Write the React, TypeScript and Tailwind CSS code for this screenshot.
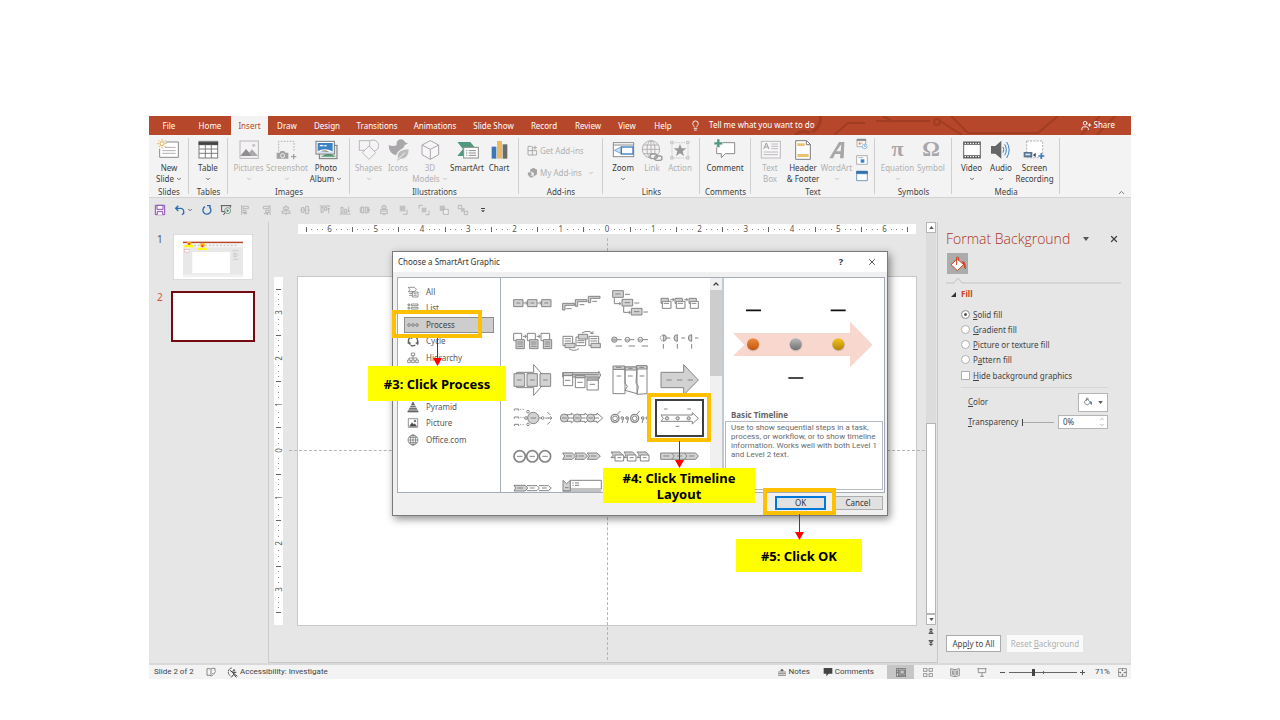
import React from 'react';
import { ChevronDown, ChevronUp, X, UserPlus, Lightbulb } from 'lucide-react';

const TABS = [
    { name: 'File', width: 'w-[40px]' },
    { name: 'Home', width: 'w-[42px]' },
    { name: 'Insert', width: 'w-[37px]' },
    { name: 'Draw', width: 'w-[38px]' },
    { name: 'Design', width: 'w-[42px]' },
    { name: 'Transitions', width: 'w-[58px]' },
    { name: 'Animations', width: 'w-[58px]' },
    { name: 'Slide Show', width: 'w-[59px]' },
    { name: 'Record', width: 'w-[42px]' },
    { name: 'Review', width: 'w-[46px]' },
    { name: 'View', width: 'w-[32px]' },
    { name: 'Help', width: 'w-[40px]' },
];

/* ---------- ribbon icons, all on a 72 unit grid ---------- */

const NewSlideIcon = () => (
    <g fill="none" stroke="#8a8a8a" strokeWidth="3">
        <path d="M26 12H64V58H8V32" fill="#fff" />
        <path d="M24 28H56M16 38H56M16 46H56" stroke="#b0b0b0" />
        <circle cx="15" cy="17" r="6" fill="#fff" stroke="#e8b04a" />
        <path d="M15 3V8M15 26V31M1 17H6M24 17H29M5 7L8 10M25 7L22 10M5 27L8 24M25 27L22 24" stroke="#e8b04a" />
    </g>
);
const TableIcon = () => (
    <g fill="none" stroke="#7d7d7d" strokeWidth="3">
        <rect x="9" y="10" width="56" height="50" fill="#fff" />
        <path d="M9 13H65V20H9Z" fill="#444" stroke="#444" />
        <path d="M28 20V60M46 20V60M9 33H65M9 46H65" />
    </g>
);
const PicturesIcon = () => (
    <g>
        <rect x="9" y="9" width="55" height="52" fill="#f4f2f4" stroke="#b9b5b9" strokeWidth="3" />
        <path d="M10 54L27 33L46 54Z" fill="#8f8d8f" />
        <path d="M36 44L45 34L63 54H46Z" fill="#aaa8aa" />
        <circle cx="50" cy="22" r="5" fill="#c9c6c9" />
    </g>
);
const ScreenshotIcon = () => (
    <g>
        <path d="M11 40V10H57V40" fill="none" stroke="#b0b0b0" strokeWidth="3" strokeDasharray="5 4" />
        <path d="M5 44H14L17 39H28L31 44H40V62H5Z" fill="#a3a1a3" />
        <circle cx="23" cy="53" r="6" fill="#a3a1a3" stroke="#f3f3f3" strokeWidth="3" />
        <path d="M56 48V64M48 56H64" stroke="#a3a1a3" strokeWidth="4" />
    </g>
);
const PhotoAlbumIcon = () => (
    <g>
        <rect x="16" y="22" width="53" height="40" fill="#e8e8e8" stroke="#777" strokeWidth="3" />
        <path d="M20 56L44 44L66 56Z" fill="#4f9a70" />
        <rect x="6" y="10" width="55" height="38" fill="#fff" stroke="#777" strokeWidth="3" />
        <rect x="11" y="15" width="45" height="28" fill="#3b82c4" />
        <path d="M16 24Q22 17 28 23Q36 18 40 25H18Z" fill="#fff" />
        <path d="M11 40Q30 28 56 40V43H11Z" fill="#fff" />
        <path d="M18 40Q32 34 46 41Z" fill="#555" />
    </g>
);
const ShapesIcon = () => (
    <g fill="#f6f4f6" stroke="#bcb8bc" strokeWidth="3">
        <circle cx="48" cy="23" r="17" />
        <rect x="7" y="8" width="31" height="29" />
        <path d="M36 24L56 44L36 64L16 44Z" />
    </g>
);
const IconsIcon = () => (
    <g fill="#a9a7a9">
        <path d="M8 21Q20 27 32 22Q30 5 44 4Q54 4 57 13L66 16L56 22Q54 30 46 33Q34 40 30 52Q8 46 8 21Z" />
        <path d="M36 61Q30 36 68 34Q68 64 43 62L36 68L32 66Z" fill="#bdbbbd" />
        <path d="M34 66L57 44" stroke="#f3f3f3" strokeWidth="3" />
    </g>
);
const CubeIcon = () => (
    <g fill="#f8f6f8" stroke="#a9a5a9" strokeWidth="3" strokeLinejoin="round">
        <path d="M37 8L62 21V50L37 64L12 50V21Z" />
        <path d="M12 21L37 34L62 21M37 34V64" fill="none" />
    </g>
);
const SmartArtIcon = () => (
    <g>
        <path d="M7 12H46L64 34L46 54H7L24 33Z" fill="#4f9a7c" />
        <rect x="26" y="28" width="44" height="32" fill="#fff" stroke="#8d8d8d" strokeWidth="3" />
        <path d="M33 38H37M41 38H63M33 45H37M41 45H63M33 52H37M41 52H63" stroke="#8d8d8d" strokeWidth="3" />
    </g>
);
const ChartIcon = () => (
    <g>
        <rect x="14" y="26" width="14" height="36" fill="#3f76b5" />
        <rect x="30" y="9" width="15" height="53" fill="#edb95e" />
        <rect x="47" y="19" width="14" height="43" fill="#6b6b6b" />
    </g>
);
const ZoomIcon = () => (
    <g fill="#fff" stroke="#8a8a8a" strokeWidth="3">
        <rect x="7" y="14" width="61" height="42" />
        <path d="M7 21H68" />
        <path d="M10 37L31 27V47Z" fill="#cfe0f2" stroke="#7fa8d2" />
        <rect x="31" y="27" width="35" height="21" stroke="#3b7cbf" strokeWidth="4" />
    </g>
);
const LinkIcon = () => (
    <g fill="none" stroke="#b3b0b3" strokeWidth="3">
        <circle cx="33" cy="34" r="26" />
        <ellipse cx="33" cy="34" rx="12" ry="26" />
        <path d="M33 8V60M7 34H59M11 21H55M11 47H48" />
        <rect x="30" y="48" width="22" height="14" rx="7" fill="#f3f3f3" stroke="#999" strokeWidth="4" />
        <rect x="44" y="54" width="22" height="13" rx="6" stroke="#999" strokeWidth="4" />
    </g>
);
const ActionIcon = () => (
    <g>
        <rect x="12" y="14" width="48" height="46" fill="none" stroke="#b5b2b5" strokeWidth="2" strokeDasharray="4 3" />
        <path d="M8 10H15V17H8ZM56 10H63V17H56ZM8 56H15V63H8ZM56 56H63V63H56Z" fill="#f3f3f3" stroke="#aaa" strokeWidth="2" />
        <path d="M36 18L41 31H55L44 40L48 54L36 46L24 54L28 40L17 31H31Z" fill="#999" />
    </g>
);
const CommentIcon = () => (
    <g>
        <path d="M11 14H65V47H37L25 59V47H11Z" fill="#fff" stroke="#8a8a8a" strokeWidth="3" />
        <path d="M16 3V29M3 16H29" stroke="#f3f3f3" strokeWidth="12" />
        <path d="M16 4V28M4 16H28" stroke="#4f9a7c" strokeWidth="7" />
    </g>
);
const TextBoxIcon = () => (
    <g stroke="#bdbabd" strokeWidth="3" fill="none">
        <rect x="10" y="10" width="57" height="50" fill="#f7f5f7" />
        <path d="M17 33L25 15L33 33M20 27H30" stroke="#9c9a9c" />
        <path d="M40 18H60M40 25H60M40 32H60M17 42H60M17 50H60" />
    </g>
);
const HeaderFooterIcon = () => (
    <g>
        <path d="M14 8H47L58 19V64H14Z" fill="#fff" stroke="#7d7d7d" strokeWidth="3" />
        <path d="M46 8V20H58" fill="none" stroke="#7d7d7d" strokeWidth="3" />
        <rect x="19" y="16" width="22" height="8" fill="#edbf70" />
        <rect x="19" y="48" width="34" height="9" fill="#edbf70" />
    </g>
);
const WordArtIcon = () => (
    <path d="M13 61L42 12H58L56 61H45L46 48H30L24 61ZM34 40H47L49 19Z" fill="#a9a6a9" />
);
const VideoIcon = () => (
    <g>
        <rect x="11" y="12" width="50" height="48" fill="#fff" stroke="#666" strokeWidth="3" />
        <path d="M11 16H61M11 56H61" stroke="#555" strokeWidth="8" />
        <path d="M14 16H60M14 56H60" stroke="#fff" strokeWidth="4" strokeDasharray="4 4" />
    </g>
);
const AudioIcon = () => (
    <g fill="none" stroke="#3b82c4" strokeWidth="3">
        <path d="M6 24H19L37 8V62L19 47H6Z" fill="#666" stroke="none" />
        <path d="M42 27Q47 35 42 44M47 19Q57 35 47 52M53 12Q68 35 53 60" />
    </g>
);
const ScreenRecordingIcon = () => (
    <g>
        <rect x="11" y="9" width="48" height="50" fill="#fff" stroke="#8a8a8a" strokeWidth="2" strokeDasharray="6 4" />
        <path d="M2 42H28V58H2Z" fill="#5a7391" />
        <path d="M7 47H22V52H7Z" fill="#dce8f5" />
        <path d="M30 51L38 44V58Z" fill="#444" />
        <path d="M55 45V63M46 54H64" stroke="#3b7cbf" strokeWidth="5" />
    </g>
);

type Tool = {
    label: string;
    label2?: string;
    width: string;
    icon?: React.ReactNode;
    glyph?: string;
    off?: boolean;
    drop?: boolean;
};

const Drop = () => <ChevronDown className="inline shrink-0 w-[6px] h-[6px]" strokeWidth={3} />;

function RibbonButton({ tool }: { tool: Tool }) {
    return (
        <button
            disabled={tool.off}
            className={`flex flex-col items-center shrink-0 pt-[3px] leading-[10px] ${tool.width} ${tool.off ? 'text-[#b1b1b1]' : 'text-[#3b3b3b]'}`}
        >
            {tool.glyph ? (
                <span className="h-6 mb-px font-['Liberation_Serif',serif] font-bold text-[22px] leading-[22px] text-[#a9a6a9]">{tool.glyph}</span>
            ) : (
                <svg viewBox="0 0 72 72" className="w-6 h-6 mb-px">{tool.icon}</svg>
            )}
            <span className="whitespace-nowrap">{tool.label}</span>
            <span className="whitespace-nowrap flex items-center gap-[2px] h-[11px]">
                {tool.label2}
                {tool.drop && <Drop />}
            </span>
        </button>
    );
}

function Group({ title, width, tools, children }: { title: string; width: string; tools?: Tool[]; children?: React.ReactNode }) {
    return (
        <section className={`flex flex-col shrink-0 relative ${width}`}>
            <div className="flex flex-1">
                {tools?.map((tool) => <RibbonButton key={tool.label} tool={tool} />)}
                {children}
            </div>
            <h2 className="text-center leading-[10px] text-[#444]">{title}</h2>
            <span className="absolute right-0 top-[3px] bottom-[3px] w-px bg-[#cfcfcf]" />
        </section>
    );
}

function TitleTabs() {
    return (
        <header className="relative flex h-[19px] bg-[#b7472a] text-white overflow-hidden">
            <svg className="absolute right-0 top-0 w-[361px] h-[19px]" viewBox="0 0 361 19" fill="none" stroke="#a03d23" strokeWidth="2">
                <path d="M64 19L78 7H95M106 5H160M170 5L192 19M113 0L124 6M181 0L198 17H268L288 0M311 19L330 0M327 19L345 0" />
                <path d="M25 19A14 14 0 0 1 40 17M50 0A14 14 0 0 1 42 16" strokeWidth="3" />
                <circle cx="167" cy="6" r="3" />
            </svg>
            <nav className="relative flex">
                {TABS.map((tab) => (
                    <button
                        key={tab.name}
                        className={`whitespace-nowrap text-center ${tab.width} ${tab.name === 'Insert' ? 'bg-[#f3f3f3] text-[#b7472a]' : ''}`}
                    >
                        {tab.name}
                    </button>
                ))}
            </nav>
            <button className="relative flex items-center gap-2 ml-[7px] pb-px whitespace-nowrap">
                <Lightbulb className="w-[11px] h-[11px]" />
                Tell me what you want to do
            </button>
            <button className="relative flex items-center gap-[2px] ml-auto mr-4 pb-px">
                <UserPlus className="w-[11px] h-[11px]" />
                Share
            </button>
        </header>
    );
}

function Ribbon() {
    return (
        <div className="relative flex h-[63px] bg-[#f3f3f3] border-b border-[#d2d2d2]">
            <Group title="Slides" width="w-[40px]" tools={[{ label: 'New', label2: 'Slide', width: 'w-[40px]', icon: <NewSlideIcon />, drop: true }]} />
            <Group title="Tables" width="w-[39px]" tools={[{ label: 'Table', width: 'w-[38px]', icon: <TableIcon />, drop: true }]} />
            <Group
                title="Images"
                width="w-[122px]"
                tools={[
                    { label: 'Pictures', width: 'w-[41px]', icon: <PicturesIcon />, off: true, drop: true },
                    { label: 'Screenshot', width: 'w-[36px]', icon: <ScreenshotIcon />, off: true, drop: true },
                    { label: 'Photo', label2: 'Album', width: 'w-[42px]', icon: <PhotoAlbumIcon />, drop: true },
                ]}
            />
            <Group
                title="Illustrations"
                width="w-[169px]"
                tools={[
                    { label: 'Shapes', width: 'w-[37px]', icon: <ShapesIcon />, off: true, drop: true },
                    { label: 'Icons', width: 'w-[22px]', icon: <IconsIcon />, off: true },
                    { label: '3D', label2: 'Models', width: 'w-[42px]', icon: <CubeIcon />, off: true, drop: true },
                    { label: 'SmartArt', width: 'w-[32px]', icon: <SmartArtIcon /> },
                    { label: 'Chart', width: 'w-[32px]', icon: <ChartIcon /> },
                ]}
            />
            <Group title="Add-ins" width="w-[84px]">
                <div className="flex flex-col gap-[11px] pt-[10px] pl-2 text-[#b1b1b1]">
                    <button disabled className="flex items-center gap-[2px] leading-[10px] whitespace-nowrap">
                        <svg viewBox="0 0 33 33" className="w-[11px] h-[11px]" fill="none" stroke="#aaa" strokeWidth="3">
                            <path d="M14 4H3V30H29V17H3M16 4V30M24 2V14M18 8H30" />
                        </svg>
                        Get Add-ins
                    </button>
                    <button disabled className="flex items-center gap-[2px] leading-[10px] whitespace-nowrap">
                        <svg viewBox="0 0 33 33" className="w-[11px] h-[11px]" fill="#a5a5a5">
                            <path d="M9 8L19 2L30 8V22L20 29V17L9 13Z" />
                            <circle cx="8" cy="21" r="6" />
                            <path d="M7 26H18V31H7Z" />
                        </svg>
                        My Add-ins
                        <span className="ml-1"><Drop /></span>
                    </button>
                </div>
            </Group>
            <Group
                title="Links"
                width="w-[97px]"
                tools={[
                    { label: 'Zoom', width: 'w-[40px]', icon: <ZoomIcon />, drop: true },
                    { label: 'Link', width: 'w-[18px]', icon: <LinkIcon />, off: true },
                    { label: 'Action', width: 'w-[38px]', icon: <ActionIcon />, off: true },
                ]}
            />
            <Group title="Comments" width="w-[51px]" tools={[{ label: 'Comment', width: 'w-[50px]', icon: <CommentIcon /> }]} />
            <Group
                title="Text"
                width="w-[124px]"
                tools={[
                    { label: 'Text', label2: 'Box', width: 'w-[38px]', icon: <TextBoxIcon />, off: true },
                    { label: 'Header', label2: '& Footer', width: 'w-[28px]', icon: <HeaderFooterIcon /> },
                    { label: 'WordArt', width: 'w-[39px]', icon: <WordArtIcon />, off: true, drop: true },
                ]}
            >
                <div className="flex flex-col gap-1 pt-[3px]">
                    <button aria-label="Date & Time">
                        <svg viewBox="0 0 36 36" className="w-3 h-3" fill="#fff" stroke="#8d8d8d" strokeWidth="2">
                            <path d="M3 4H29V26H3Z" />
                            <path d="M3 4H29V8H3Z" fill="#777" />
                            <path d="M8 13H14V20H8Z" fill="#e38a4f" stroke="none" />
                            <path d="M18 13V18" />
                            <circle cx="26" cy="25" r="7" stroke="#5f97cf" />
                            <path d="M26 20V26H29" stroke="#3b82c4" fill="none" />
                        </svg>
                    </button>
                    <button aria-label="Slide Number">
                        <svg viewBox="0 0 36 36" className="w-3 h-3" fill="#fff" stroke="#8d8d8d" strokeWidth="2">
                            <path d="M2 5H34V31H2Z" />
                            <path d="M7 11H22" />
                            <path d="M14 16H25V26H14Z" fill="#3b82c4" stroke="none" />
                        </svg>
                    </button>
                    <button aria-label="Object">
                        <svg viewBox="0 0 36 36" className="w-3 h-3" fill="#fff" stroke="#2f6fae" strokeWidth="2">
                            <path d="M2 4H34V32H2Z" />
                            <path d="M2 4H34V11H2Z" fill="#2f6fae" />
                        </svg>
                    </button>
                </div>
            </Group>
            <Group
                title="Symbols"
                width="w-[77px]"
                tools={[
                    { label: 'Equation', width: 'w-[45px]', glyph: 'π', off: true, drop: true },
                    { label: 'Symbol', width: 'w-[22px]', glyph: 'Ω', off: true },
                ]}
            />
            <Group
                title="Media"
                width="w-[108px]"
                tools={[
                    { label: 'Video', width: 'w-[39px]', icon: <VideoIcon />, drop: true },
                    { label: 'Audio', width: 'w-[20px]', icon: <AudioIcon />, drop: true },
                    { label: 'Screen', label2: 'Recording', width: 'w-[47px]', icon: <ScreenRecordingIcon /> },
                ]}
            />
            <button aria-label="Collapse ribbon" className="ml-auto mr-[5px] self-end text-[#555]">
                <ChevronUp className="w-[9px] h-[9px]" />
            </button>
        </div>
    );
}

/* quick access icons, 36 unit grid */
const QUICK: { name: string; art: React.ReactNode }[] = [
    { name: 'Align Left', art: <path d="M5 3V33M9 7H25V14H9ZM9 19H18V26H9ZM22 28H12L16 24M12 28L16 32" /> },
    { name: 'Align Right', art: <path d="M30 3V33M26 7H10V14H26ZM26 19H17V26H26ZM12 29H24L20 25M24 29L20 33" /> },
    { name: 'Align Center', art: <path d="M18 3V9M11 9H25V16H11ZM18 16V21M6 21H30V28H6ZM18 28V33" /> },
    { name: 'Align Middle', art: <path d="M3 18H8M8 11H15V25H8ZM15 18H20M20 7H28V29H20ZM28 18H33" /> },
    { name: 'Align Top', art: <path d="M2 6H34M6 10H12V25H6ZM17 10H23V19H17ZM29 28V12L25 16M29 12L33 16" /> },
    { name: 'Align Bottom', art: <path d="M2 30H34M6 26H12V10H6ZM17 26H23V16H17ZM29 8V24L25 20M29 24L33 20" /> },
    { name: 'Distribute Horizontally', art: <path d="M4 9V27M8 9H14V27H8ZM19 9H25V27H19ZM29 9V27M25 18H34" /> },
    { name: 'Distribute Vertically', art: <path d="M18 2V6M12 6H24V13H12ZM6 17H30M8 21H28V29H8ZM18 29V34" /> },
    { name: 'Bring to Front', art: <><path d="M5 5H22V22H5Z" fill="#c4c0c4" stroke="none" /><path d="M27 17V31H15" /></> },
    { name: 'Send to Back', art: <><path d="M3 14V4H14M33 20V32H22" /><path d="M11 11H25V25H11Z" fill="#c4c0c4" stroke="none" /></> },
    { name: 'Bring Forward', art: <><path d="M5 5H21V21H5Z" fill="#c4c0c4" stroke="none" /><path d="M16 16H31V31H16Z" fill="#eee" /></> },
    { name: 'Group', art: <><path d="M4 4H14V14H4ZM22 22H32V32H22Z" /><path d="M12 12H23V23H12Z" fill="#c4c0c4" stroke="none" /></> },
];

function QuickAccess() {
    return (
        <div className="flex items-center justify-between w-[340px] h-[24px] pl-[5px]">
            <button aria-label="Save">
                <svg viewBox="0 0 36 36" className="w-3 h-3" fill="#f0e8f7" stroke="#8a4fb3" strokeWidth="3">
                    <path d="M4 4H32V32H4Z" />
                    <path d="M9 4H27V16H9ZM10 32V23H26V32" fill="#fff" />
                </svg>
            </button>
            <button aria-label="Undo" className="flex items-center gap-px w-[19px] text-[#444]">
                <svg viewBox="0 0 36 36" className="w-3 h-3 shrink-0" fill="none" stroke="#2b6cb0" strokeWidth="4">
                    <path d="M13 5L5 13L13 21M6 13H20Q31 14 29 28L24 32" />
                </svg>
                <Drop />
            </button>
            <button aria-label="Redo">
                <svg viewBox="0 0 36 36" className="w-3 h-3" fill="none" stroke="#2b6cb0" strokeWidth="4">
                    <path d="M12 8A12 12 0 1 0 25 9M18 5H27V14" />
                </svg>
            </button>
            <button aria-label="Start From Beginning">
                <svg viewBox="0 0 36 36" className="w-3 h-3" fill="none" stroke="#555" strokeWidth="3">
                    <path d="M2 5H34M5 5V23H16M31 5V11M10 33L17 24" />
                    <circle cx="23" cy="20" r="9" fill="#dff0e6" stroke="#666" strokeWidth="2" />
                    <path d="M20 15L28 20L20 25Z" fill="#3a8f63" stroke="none" />
                </svg>
            </button>
            {QUICK.map((q) => (
                <button key={q.name} aria-label={q.name} disabled>
                    <svg viewBox="0 0 36 36" className="w-3 h-3" fill="none" stroke="#a2a2a2" strokeWidth="2">{q.art}</svg>
                </button>
            ))}
            <button aria-label="Customize toolbar">
                <svg viewBox="0 0 36 36" className="w-3 h-3" fill="#444">
                    <path d="M12 12H24V15H12ZM12 19H24L18 25Z" />
                </svg>
            </button>
        </div>
    );
}

function Thumbnails() {
    return (
        <aside className="w-[120px] shrink-0 border-r border-[#cccccc] pt-[12px]">
            <button className="flex items-start w-full h-[57px] pl-2 text-[10px] leading-[10px] text-[#555]">
                <span className="w-[16px] text-left">1</span>
                <svg viewBox="0 0 240 138" className="w-20 h-[46px]">
                    <rect width="240" height="138" fill="#fff" stroke="#ccc" strokeWidth="4" />
                    <rect x="30" y="24" width="180" height="104" fill="#e8e8e8" />
                    <rect x="30" y="23" width="180" height="5" fill="#b7472a" />
                    <rect x="30" y="28" width="180" height="12" fill="#f3f3f3" />
                    <path d="M64 34H190" stroke="#bbb" strokeWidth="3" strokeDasharray="5 6" />
                    <rect x="58" y="54" width="113" height="64" fill="#fff" />
                    <rect x="34" y="47" width="16" height="7" fill="#fff" stroke="#d77" />
                    <path d="M34 33H61V40H34ZM74 41H101V48H74Z" fill="#ff0" />
                    <path d="M42 24H55V32H42ZM82 28H95V38H82Z" fill="#ffb400" />
                    <path d="M46 27H51V32H46ZM86 34H91V40H86Z" fill="#e33" />
                    <path d="M178 50H196M180 58H192M180 63H196M180 68H192M180 76H196" stroke="#999" strokeWidth="1" />
                    <rect x="30" y="122" width="180" height="4" fill="#f3f3f3" />
                </svg>
            </button>
            <button className="flex items-start w-full pl-2 text-[10px] leading-[12px] text-[#d0523a]">
                <span className="w-[14px] text-left">2</span>
                <span className="w-[84px] h-[51px] bg-white border-2 border-[#740b12]" />
            </button>
        </aside>
    );
}

function HorizontalRuler() {
    return (
        <div className="flex h-[10px] bg-white text-[8px] leading-[10px] text-[#555] mx-px">
            <span className="flex-[0.17]" />
            {[6, 5, 4, 3, 2, 1, 0, 1, 2, 3, 4, 5, 6].map((n, i) => (
                <div key={i} className="flex flex-1 items-center justify-between">
                    <i className="w-px h-[5px] bg-[#666]" />
                    {[0, 1, 2].map((d) => <i key={d} className="w-px h-px bg-[#888]" />)}
                    <span>{n}</span>
                    {[0, 1, 2, 3].map((d) => <i key={d} className={d < 3 ? 'w-px h-px bg-[#888]' : 'w-0'} />)}
                </div>
            ))}
            <i className="w-px h-[5px] self-center bg-[#666]" />
            <span className="flex-[0.17]" />
        </div>
    );
}

function VerticalRuler() {
    return (
        <div className="flex flex-col w-[9px] h-[348px] mt-[55px] ml-[5px] bg-white text-[8px] leading-[5px] text-[#555]">
            <span className="flex-[0.25]" />
            {[3, 2, 1, 0, 1, 2, 3].map((n, i) => (
                <div key={i} className="flex flex-col flex-1 items-center justify-between">
                    <i className="h-px w-[5px] bg-[#666]" />
                    {[0, 1, 2].map((d) => <i key={d} className="w-px h-px bg-[#888]" />)}
                    <span className="-rotate-90">{n}</span>
                    {[0, 1, 2, 3].map((d) => <i key={d} className={d < 3 ? 'w-px h-px bg-[#888]' : 'h-0'} />)}
                </div>
            ))}
            <i className="h-px w-[5px] self-center bg-[#666]" />
            <span className="flex-[0.25]" />
        </div>
    );
}

function Stage() {
    return (
        <main className="flex flex-1 min-w-0 border-b border-[#c8c8c8]">
            <div className="w-[28px] shrink-0"><VerticalRuler /></div>
            <div className="relative flex-1 min-w-0 pt-[2px]">
                <HorizontalRuler />
                <div className="h-[350px] mt-[42px] bg-white border border-[#c8c8c8]" />
                <span className="absolute left-1/2 top-[16px] bottom-[2px] border-l border-dashed border-[#b5b5b5]" />
                <span className="absolute left-[-8px] right-[-8px] top-[228px] border-t border-dashed border-[#b5b5b5]" />
            </div>
            <div className="flex flex-col items-center w-[20px] shrink-0 pl-[8px] text-[#555]">
                <button aria-label="Scroll up" className="flex items-center justify-center w-[10px] h-[11px] bg-white border border-[#b5b5b5]">
                    <svg viewBox="0 0 6 4" className="w-[5px] h-[3px]"><path d="M0 4L3 0L6 4Z" fill="#555" /></svg>
                </button>
                <div className="w-[10px] h-[190px] bg-[#dcdcdc]" />
                <div className="w-[10px] h-[191px] bg-white border border-[#b5b5b5]" />
                <button aria-label="Scroll down" className="flex items-center justify-center w-[10px] h-[11px] bg-white border border-[#b5b5b5]">
                    <svg viewBox="0 0 6 4" className="w-[5px] h-[3px]"><path d="M0 0L3 4L6 0Z" fill="#555" /></svg>
                </button>
                <button aria-label="Previous slide" className="mt-[2px]">
                    <svg viewBox="0 0 18 24" className="w-[6px] h-2" fill="#555"><path d="M2 10L9 3L16 10ZM2 17L9 10L16 17ZM2 18H16V21H2Z" /></svg>
                </button>
                <button aria-label="Next slide" className="mt-1">
                    <svg viewBox="0 0 18 24" className="w-[6px] h-2" fill="#555"><path d="M2 14L9 21L16 14ZM2 7L9 14L16 7ZM2 3H16V6H2Z" /></svg>
                </button>
            </div>
        </main>
    );
}

const FILLS = [
    { id: 'solid', key: 'S', rest: 'olid fill' },
    { id: 'gradient', key: 'G', rest: 'radient fill' },
    { id: 'picture', key: 'P', rest: 'icture or texture fill' },
    { id: 'pattern', pre: 'P', key: 'a', rest: 'ttern fill' },
];

function FormatPane() {
    return (
        <aside className="flex flex-col w-[194px] shrink-0 border-l border-[#c8c8c8] pl-2 pb-[11px] text-[#444]">
            <div className="flex items-center h-[20px] mt-[7px] pr-3">
                <h2 className="flex-1 font-['Open_Sans','Noto_Sans',sans-serif] font-light text-[14px] text-[#a83424] whitespace-nowrap">Format Background</h2>
                <button aria-label="Pane options" className="mr-5">
                    <svg viewBox="0 0 6 4" className="w-[6px] h-1"><path d="M0 0L3 4L6 0Z" fill="#555" /></svg>
                </button>
                <button aria-label="Close pane"><X className="w-[10px] h-[10px]" strokeWidth={3} /></button>
            </div>
            <button aria-label="Fill & Line" className="flex items-center justify-center w-[21px] h-[21px] mt-1 ml-px bg-[#acacac]">
                <svg viewBox="0 0 54 54" className="w-[18px] h-[18px]">
                    <path d="M25 12L44 29L25 47L6 29Z" fill="#fff" stroke="#cf3f1c" strokeWidth="3" />
                    <path d="M23 30V7Q26 3 29 8V18" fill="none" stroke="#cf3f1c" strokeWidth="3" />
                    <path d="M38 17Q52 18 50 43Q44 40 44 29Z" fill="#cf3f1c" />
                </svg>
            </button>
            <svg viewBox="0 0 175 10" className="w-[175px] h-[10px]" fill="none" stroke="#c3c3c3">
                <path d="M0 9H8L12 4L16 9H175" />
            </svg>
            <h3 className="flex items-center gap-[5px] mt-1 ml-[5px] leading-[12px] font-bold text-[#c8401f]">
                <svg viewBox="0 0 5 5" className="w-[5px] h-[5px]"><path d="M5 0V5H0Z" fill="#333" /></svg>
                Fill
            </h3>
            <div className="flex flex-col mt-[7px] ml-[15px]">
                {FILLS.map((f) => (
                    <label key={f.id} className="flex items-center gap-[3px] h-[15px]">
                        <input
                            type="radio"
                            name="fill"
                            defaultChecked={f.id === 'solid'}
                            className="appearance-none w-[9px] h-[9px] rounded-full border border-[#b0b0b0] bg-white checked:bg-[#555] checked:shadow-[inset_0_0_0_2px_white]"
                        />
                        <span>{f.pre}<u>{f.key}</u>{f.rest}</span>
                    </label>
                ))}
                <label className="flex items-center gap-[3px] h-[17px]">
                    <input type="checkbox" className="appearance-none w-[9px] h-[9px] border border-[#b0b0b0] bg-white" />
                    <span><u>H</u>ide background graphics</span>
                </label>
            </div>
            <div className="ml-[15px] mr-[23px] mt-[3px] pt-[4px] pl-[7px] border-t border-[#d6d6d6]">
                <div className="flex items-center justify-between h-[20px]">
                    <span><u>C</u>olor</span>
                    <button aria-label="Fill color" className="flex items-center justify-center gap-[5px] w-[30px] h-[19px] bg-white border border-[#b5b5b5]">
                        <svg viewBox="0 0 30 30" className="w-[10px] h-[10px]" fill="none" stroke="#555" strokeWidth="2">
                            <path d="M4 14L13 6L22 16L13 24Q6 24 4 14ZM10 12V4Q13 1 15 5V9" />
                            <path d="M22 11Q29 14 26 24L22 20Z" fill="#2f6fae" stroke="none" />
                        </svg>
                        <svg viewBox="0 0 6 4" className="w-[5px] h-[3px]"><path d="M0 0L3 4L6 0Z" fill="#555" /></svg>
                    </button>
                </div>
                <div className="flex items-center h-[20px]">
                    <label htmlFor="transparency"><u>T</u>ransparency</label>
                    <input
                        id="transparency"
                        type="range"
                        defaultValue="0"
                        className="appearance-none w-[32px] h-[7px] ml-auto mr-1 bg-[linear-gradient(#aaa,#aaa)] bg-[length:100%_1px] bg-center bg-no-repeat [&::-webkit-slider-thumb]:appearance-none [&::-webkit-slider-thumb]:w-px [&::-webkit-slider-thumb]:h-[7px] [&::-webkit-slider-thumb]:bg-[#444]"
                    />
                    <div className="flex items-center w-[50px] h-[14px] bg-white border border-[#b5b5b5]">
                        <input aria-label="Transparency value" defaultValue="0%" className="w-[36px] pl-1 outline-none bg-transparent" />
                        <span className="flex flex-col ml-auto mr-[2px] text-[#777]">
                            <ChevronUp className="w-[6px] h-[6px]" />
                            <ChevronDown className="w-[6px] h-[6px]" />
                        </span>
                    </div>
                </div>
            </div>
            <div className="flex gap-[6px] mt-auto">
                <button className="w-[55px] h-[17px] bg-white border border-[#ababab] leading-[14px] whitespace-nowrap">App<u>l</u>y to All</button>
                <button disabled className="w-[76px] h-[17px] bg-[#fafafa] text-[#b1b1b1] whitespace-nowrap">Reset <u>B</u>ackground</button>
            </div>
        </aside>
    );
}

function StatusBar() {
    return (
        <footer className="flex items-center h-[14px] bg-[#f3f3f3] font-['Roboto','Noto_Sans',sans-serif] text-[#444] whitespace-nowrap">
            <span className="ml-[5px] w-[52px]">Slide 2 of 2</span>
            <svg viewBox="0 0 30 30" className="w-[10px] h-[10px] mr-[11px]" fill="none" stroke="#555" strokeWidth="2">
                <path d="M14 5H3V25H13L15 28M15 28V6L18 4H27V12M18 25H21M19 18L23 22L29 13" />
            </svg>
            <button className="flex items-center gap-[2px]">
                <svg viewBox="0 0 33 33" className="w-[11px] h-[11px]" fill="none" stroke="#444" strokeWidth="3">
                    <path d="M14 3Q3 6 4 17Q5 24 11 27" strokeDasharray="6 2" />
                    <circle cx="21" cy="10" r="2" />
                    <path d="M12 13L20 16H28M20 16V22L13 31M20 22L28 31M9 10L31 28" />
                </svg>
                Accessibility: Investigate
            </button>
            <button className="flex items-center gap-[3px] ml-auto mr-[13px]">
                <svg viewBox="0 0 24 24" className="w-2 h-2" fill="none" stroke="#555" strokeWidth="2">
                    <path d="M0 12H24M0 17H24M0 22H24" /><path d="M8 8L12 3L16 8Z" fill="#555" />
                </svg>
                Notes
            </button>
            <button className="flex items-center gap-[2px] mr-[13px]">
                <svg viewBox="0 0 30 30" className="w-[10px] h-[10px]"><path d="M2 3H28V20H17L10 28V20H2Z" fill="#444" /></svg>
                Comments
            </button>
            <button aria-label="Normal view" className="flex items-center justify-center w-[27px] h-[14px] bg-[#c6c6c6]">
                <svg viewBox="0 0 30 27" className="w-[10px] h-[9px]" fill="none" stroke="#555" strokeWidth="2">
                    <path d="M1 1H29V26H1ZM8 1V26M12 6H25V18H12ZM8 22H29M1 8H8M1 14H8" />
                </svg>
            </button>
            <button aria-label="Slide sorter" className="ml-[9px]">
                <svg viewBox="0 0 30 27" className="w-[10px] h-[9px]" fill="none" stroke="#666" strokeWidth="2">
                    <path d="M1 1H12V10H1ZM18 1H29V10H18ZM1 17H12V26H1ZM18 17H29V26H18Z" />
                </svg>
            </button>
            <button aria-label="Reading view" className="ml-[17px]">
                <svg viewBox="0 0 30 27" className="w-[10px] h-[9px]" fill="none" stroke="#666" strokeWidth="2">
                    <path d="M2 2L15 5L28 2V23L15 26L2 23ZM15 5V26M7 7V20M10 8V21M20 8V21M23 7V20" />
                </svg>
            </button>
            <button aria-label="Slide show" className="ml-[17px]">
                <svg viewBox="0 0 30 27" className="w-[10px] h-[9px]" fill="none" stroke="#666" strokeWidth="2">
                    <path d="M1 2H29M4 2V14H26V2M15 14V25M9 25H21" />
                </svg>
            </button>
            <button aria-label="Zoom out" className="ml-[13px] w-[7px]"><span className="block w-[5px] h-px bg-[#555]" /></button>
            <input
                aria-label="Zoom"
                type="range"
                min="0"
                max="100"
                defaultValue="35"
                className="appearance-none w-[68px] h-[7px] mx-[2px] bg-[linear-gradient(#666,#666),linear-gradient(#666,#666)] bg-[length:100%_1px,1px_3px] bg-center bg-no-repeat [&::-webkit-slider-thumb]:appearance-none [&::-webkit-slider-thumb]:w-[3px] [&::-webkit-slider-thumb]:h-[7px] [&::-webkit-slider-thumb]:bg-[#444]"
            />
            <button aria-label="Zoom in" className="ml-[1px]">
                <svg viewBox="0 0 10 10" className="w-[5px] h-[5px]" stroke="#555" strokeWidth="2"><path d="M0 5H10M5 0V10" /></svg>
            </button>
            <button className="w-[17px] ml-[9px]">71%</button>
            <button aria-label="Fit slide" className="ml-[7px] mr-1">
                <svg viewBox="0 0 30 30" className="w-[9px] h-[9px]" fill="none" stroke="#555" strokeWidth="2">
                    <path d="M2 2H28V28H2ZM2 15H10L7 12M10 15L7 18M28 15H20L23 12M20 15L23 18M15 2V10L12 7M15 10L18 7M15 28V20L12 23M15 20L18 23" />
                </svg>
            </button>
        </footer>
    );
}

/* ---------- dialog ---------- */

const CATEGORIES: { name: string; art: React.ReactNode }[] = [
    { name: 'All', art: <><path d="M4 4H22L28 11L22 17H4L9 11Z" /><path d="M16 18H33V33H16ZM6 22H16M6 28H16M20 23H29M20 28H29" /></> },
    { name: 'List', art: <path d="M3 6H8V11H3ZM3 16H8V21H3ZM3 26H8V31H3ZM13 6H33V11H13ZM13 16H33V21H13ZM13 26H33V31H13Z" /> },
    { name: 'Process', art: <><circle cx="6" cy="18" r="4" /><circle cx="18" cy="18" r="4" /><circle cx="30" cy="18" r="4" /></> },
    { name: 'Cycle', art: <><path d="M27 7A14 14 0 0 1 31 22M25 30A14 14 0 0 1 11 31M5 23A14 14 0 0 1 13 6" strokeWidth="4" /><path d="M13 2V11L20 6ZM26 24L34 20L33 29ZM2 24L9 21L10 29Z" fill="#666" /></> },
    { name: 'Hierarchy', art: <path d="M13 3H23V11H13ZM18 11V18M6 24V18H30V24M18 18V24M2 24H10V32H2ZM14 24H22V32H14ZM26 24H34V32H26Z" /> },
    { name: 'Pyramid', art: <><path d="M18 3L34 33H2Z" fill="#666" /><path d="M9 14H27M7 20H29M4 27H32" stroke="#fff" /></> },
    { name: 'Picture', art: <><path d="M4 5H32V31H4Z" /><path d="M8 28L15 17L20 23L23 20L29 28Z" fill="#444" /><path d="M22 10H26V14H22Z" fill="#444" /></> },
    { name: 'Office.com', art: <><circle cx="18" cy="18" r="15" /><path d="M18 3V33M3 18H33M6 10H30M6 26H30" /><ellipse cx="18" cy="18" rx="8" ry="15" /></> },
];

function CategoryList() {
    return (
        <nav className="w-[103px] h-full pt-[6px] px-[6px] border-r border-[#a5adb8] text-[#5a5a5a]">
            <div className="grid grid-rows-10 h-[164px]">
                {CATEGORIES.map((c) => (
                    <React.Fragment key={c.name}>
                        {c.name === 'Pyramid' && <div className="row-span-2" />}
                        <button
                            className={`flex items-center gap-[7px] w-[90px] h-[16px] pl-[2px] border ${c.name === 'Process' ? 'bg-[#cdcdcd] border-[#8f8f8f] text-[#444]' : 'border-transparent'}`}
                        >
                            <svg viewBox="0 0 36 36" className="w-3 h-3" fill="none" stroke="#606060" strokeWidth="2">{c.art}</svg>
                            {c.name}
                        </button>
                    </React.Fragment>
                ))}
            </div>
        </nav>
    );
}

/* layout previews, drawn on a 147 x 114 cell centred at 73,57 */
const G = '#d2d2d2';
const LAYOUTS: { name: string; art: React.ReactNode }[] = [
    {
        name: 'Basic Process',
        art: <><path d="M17 47H45V68H17ZM59 47H87V68H59ZM101 47H129V68H101Z" fill={G} /><path d="M46 57H58L54 52M58 57L54 62M88 57H100L96 52M100 57L96 62M25 57H37M67 57H79M109 57H121" /></>,
    },
    {
        name: 'Step Up Process',
        art: <><path d="M17 78V58H52V64H24V78ZM55 67V47H90V53H62V67ZM94 56V37H129V43H101V56Z" fill={G} /><path d="M28 74H44M68 62H82M106 52H120" /></>,
    },
    {
        name: 'Step Down Process',
        art: <><path d="M20 20H52V40H20ZM48 46H80V66H48ZM76 73H108V93H76Z" fill={G} /><path d="M25 41V59H44L40 54M44 59L40 64M53 67V85H73L69 80M73 85L69 90M28 30H44M56 56H72M84 83H100M57 31H72M85 57H100M112 84H126" /></>,
    },
    {
        name: 'Accent Process',
        art: <><path d="M18 43H40V58H18ZM60 43H82V58H60ZM102 43H124V58H102Z" fill={G} /><path d="M22 52H48V73H22ZM64 52H90V73H64ZM106 52H130V73H106Z" fill="#fff" /><path d="M26 58H42M68 58H84M110 58H124M46 47H57L53 42M57 47L53 52M88 47H98L94 42M98 47L94 52" /></>,
    },
    {
        name: 'Alternating Flow',
        art: <><path d="M17 34H41V56H17ZM58 34H82V56H58ZM99 34H125V56H99Z" fill="#fff" /><path d="M24 53H49V80H24ZM65 53H90V80H65ZM106 53H131V80H106Z" fill={G} /><path d="M45 43H55L51 38M55 43L51 48M86 43H96L92 38M96 43L92 48M28 60H45M28 66H45M28 73H45M69 60H86M69 66H86M69 73H86M110 60H127M110 66H127M110 73H127" /></>,
    },
    {
        name: 'Continuous Process',
        art: <><path d="M18 43H47V71H18ZM57 45H86V71H57ZM96 43H125V71H96Z" fill="#fff" /><path d="M24 64H54V77H24ZM64 37H92V51H64ZM102 64H130V77H102Z" fill={G} /><path d="M36 80Q50 90 66 80M75 33Q94 22 108 35M108 35L108 28M108 35L100 34M23 50H42M23 57H42M61 56H82M61 62H82M100 50H121M100 57H121" /></>,
    },
    {
        name: 'Increasing Circle',
        art: <><circle cx="25" cy="53" r="8" fill={G} /><circle cx="64" cy="53" r="7" fill="#fff" /><circle cx="103" cy="53" r="7" fill="#fff" /><path d="M33 53H47M71 53H85M110 53H126M29 72H48M68 72H87M107 72H126M18 54H31M57 54H70M96 54H109" /></>,
    },
    {
        name: 'Pie Process',
        art: <><circle cx="25" cy="48" r="9" strokeDasharray="4 2" /><path d="M25 39A9 9 0 0 1 25 57ZM67 38A10 10 0 0 0 67 58ZM110 38A10 10 0 0 0 110 58Z" fill={G} /><path d="M36 48H46M79 48H90M120 48H130M25 66V80M67 66V80M110 66V80" /></>,
    },
    {
        name: 'Detailed Process',
        art: <><path d="M26 34H77V11L118 57L77 103V80H26Z" fill="#fff" /><path d="M18 38H50V76H18ZM57 38H88V76H57ZM96 38H128V76H96Z" fill={G} /><path d="M27 57H41M66 57H80M105 57H119" /></>,
    },
    {
        name: 'Grouped Process',
        art: <><path d="M17 35H125V31L131 42L125 54V48H17ZM17 41H125" fill={G} /><path d="M19 44H47V74H19ZM55 50H84V80H55ZM90 57H124V87H90Z" fill="#fff" /><path d="M19 35H47V43H19ZM55 44H84V50H55ZM90 51H124V57H90Z" fill={G} /><path d="M24 58H40M61 64H77M98 70H114" /></>,
    },
    {
        name: 'Phased Process',
        art: <><path d="M21 25H57V98H21ZM57 18H93V98L57 88L64 76L57 66ZM93 15H123V98L93 100L97 76L90 66Z" fill="#fff" /><path d="M21 15H57V25H21ZM57 18H93V27H57ZM91 14H123V24H91Z" fill={G} /><path d="M32 45H46M66 45H80M101 45H115M30 19H46M67 22H80M100 19H114" /></>,
    },
    {
        name: 'Arrow Process',
        art: <><path d="M18 34H86V11L130 57L86 102V80H18Z" fill={G} /><path d="M34 57H50M66 57H82M98 57H114" /></>,
    },
    {
        name: 'Converging',
        art: <><circle cx="76" cy="57" r="17" fill={G} /><path d="M19 35V30H32V35M37 31H40M44 31H47M19 59V54H32V59M37 55H40M44 55H47M19 81V76H32V81M37 77H40M44 77H47M94 57H100M112 57H122M68 57H84" /><circle cx="60" cy="38" r="4" /><circle cx="54" cy="57" r="4" /><circle cx="60" cy="76" r="4" /><circle cx="104" cy="57" r="4" /><path d="M118 39L127 48M118 76L127 68M120 57H131L127 52M131 57L127 62" /></>,
    },
    {
        name: 'Circle Arrow',
        art: <><path d="M20 47H43V42L60 57L43 72V67H20ZM61 47H84V42L101 57L84 72V67H61ZM101 47H120V42L137 57L120 72V67H101Z" fill="#fff" /><circle cx="22" cy="57" r="12" fill={G} /><circle cx="61" cy="57" r="12" fill={G} /><circle cx="101" cy="57" r="12" fill={G} /><path d="M15 57H29M54 57H68M94 57H108M34 57H48M74 57H86M112 57H126" /></>,
    },
    {
        name: 'Circle Accent',
        art: <><circle cx="27" cy="58" r="12" strokeWidth="4" /><circle cx="27" cy="58" r="7" /><circle cx="86" cy="58" r="12" strokeWidth="4" /><circle cx="86" cy="58" r="7" /><circle cx="49" cy="57" r="4" fill={G} /><circle cx="63" cy="57" r="4" fill={G} /><circle cx="110" cy="57" r="4" fill={G} /><circle cx="124" cy="57" r="4" fill={G} /><path d="M34 46L43 36M92 46L101 36M48 72L53 58M63 72L68 58M108 72L113 58M123 72L128 58" /></>,
    },
    {
        name: 'Basic Timeline',
        art: <><path d="M18 48H112V41L130 58L112 75V67H18L25 58Z" fill="#fff" /><circle cx="36" cy="58" r="5" fill={G} /><circle cx="68" cy="58" r="5" fill={G} /><circle cx="101" cy="58" r="5" fill={G} /><path d="M27 30H38M97 30H108M62 82H73" /></>,
    },
    {
        name: 'Circle Process',
        art: <g strokeWidth="5"><circle cx="35" cy="58" r="17" /><circle cx="73" cy="58" r="17" /><circle cx="111" cy="58" r="17" /><path d="M27 58H43M65 58H81M103 58H119" strokeWidth="3" /></g>,
    },
    {
        name: 'Basic Chevron',
        art: <><path d="M17 48H46L56 57L46 67H17L23 57ZM54 48H82L92 57L82 67H54L60 57ZM91 48H120L130 57L120 67H91L97 57Z" fill={G} /><path d="M27 57H45M64 57H81M101 57H118" /></>,
    },
    {
        name: 'Chevron Accent',
        art: <><path d="M15 45H42L50 54L42 62H15L22 54ZM54 45H80L88 54L80 62H54L60 54ZM93 45H120L128 54L120 62H93L100 54Z" fill={G} /><path d="M27 54H53V72H27ZM64 54H90V72H64ZM103 54H129V72H103Z" fill="#fff" /><path d="M34 62H46M71 62H83M110 62H122" /></>,
    },
    {
        name: 'Closed Chevron',
        art: <><path d="M17 48H122L130 57L122 67H17ZM50 48L58 57L50 67M88 48L96 57L88 67" fill={G} /><path d="M25 57H43M66 57H82M102 57H118" /></>,
    },
    {
        name: 'Chevron List',
        art: <><path d="M18 28H52L59 36L52 45H18L23 36Z" fill={G} /><path d="M57 29H87L94 36L87 44H57M93 29H121L130 36L121 44H93M28 36H45M66 36H80M102 36H116" /></>,
    },
    {
        name: 'Vertical Chevron',
        art: <><path d="M18 13L29 23L40 13V45H18Z" fill={G} /><path d="M40 13H133V39H40Z" fill="#fff" /><path d="M46 21H50M54 21H66M46 28H50M54 28H66M24 35H35M17 45H133" /></>,
    },
];

function Gallery() {
    return (
        <div className="flex w-[221px] h-full overflow-hidden">
            <div className="grid grid-cols-4 grid-rows-6 w-[196px] h-[230px] ml-[7px] mt-[6px] shrink-0">
                {LAYOUTS.map((l) => (
                    <button
                        key={l.name}
                        aria-label={l.name}
                        className={l.name === 'Basic Timeline' ? 'w-[49px] h-[38px] outline-2 -outline-offset-2 outline-[#3c4043]' : 'w-[49px] h-[38px]'}
                    >
                        <svg viewBox="0 0 147 114" className="w-[49px] h-[38px]" fill="none" stroke="#858585" strokeWidth="3">{l.art}</svg>
                    </button>
                ))}
            </div>
            <div className="flex flex-col w-3 ml-auto bg-[#f0f0f0]">
                <button aria-label="Scroll layouts up" className="flex items-center justify-center h-3 text-[#444]">
                    <ChevronUp className="w-2 h-2" strokeWidth={4} />
                </button>
                <div className="h-[86px] bg-[#cdcdcd]" />
            </div>
        </div>
    );
}

function Preview() {
    return (
        <div className="flex flex-col w-[162px] h-full border-l-2 border-[#c3c9d1] bg-white">
            <svg viewBox="-3 0 480 390" className="w-[160px] h-[130px]">
                <defs>
                    <linearGradient id="orange" x1="0" y1="0" x2="0" y2="1"><stop stopColor="#f08a3c" /><stop offset="1" stopColor="#c4540c" /></linearGradient>
                    <linearGradient id="grey" x1="0" y1="0" x2="0" y2="1"><stop stopColor="#b8b8b8" /><stop offset="1" stopColor="#707070" /></linearGradient>
                    <linearGradient id="gold" x1="0" y1="0" x2="0" y2="1"><stop stopColor="#f3c220" /><stop offset="1" stopColor="#b58500" /></linearGradient>
                </defs>
                <path d="M24 165H375V131L443 200L375 268V234H24L58 200Z" fill="#f8d7cf" />
                <circle cx="85" cy="201" r="19" fill="#aaa" opacity=".5" />
                <circle cx="84" cy="199" r="18" fill="url(#orange)" />
                <circle cx="213" cy="201" r="19" fill="#aaa" opacity=".5" />
                <circle cx="212" cy="199" r="18" fill="url(#grey)" />
                <circle cx="341" cy="201" r="19" fill="#aaa" opacity=".5" />
                <circle cx="340" cy="199" r="18" fill="url(#gold)" />
                <path d="M63 97H108M317 97H362M190 300H235" stroke="#111" strokeWidth="5" />
            </svg>
            <h3 className="pl-[7px] leading-[13px] font-bold text-[#666]">Basic Timeline</h3>
            <p className="flex-1 mx-px mb-[2px] px-[5px] pt-px border border-[#b5bbc4] font-['Roboto','Noto_Sans',sans-serif] leading-[9px] whitespace-nowrap text-[#6a6a6a]">
                Use to show sequential steps in a task,<br />
                process, or workflow, or to show timeline<br />
                information. Works well with both Level 1<br />
                and Level 2 text.
            </p>
        </div>
    );
}

function SmartArtDialog() {
    return (
        <div role="dialog" aria-label="Choose a SmartArt Graphic" className="absolute left-[243px] top-[135px] w-[496px] h-[265px] flex flex-col bg-[#f0f0f0] border border-[#7a7a7a] shadow-[2px_3px_8px_rgba(0,0,0,0.45)]">
            <div className="flex items-center h-[20px] pl-[5px] bg-white text-[#333]">
                <h2 className="flex-1">Choose a SmartArt Graphic</h2>
                <button className="w-[20px] font-bold text-[9px]">?</button>
                <button aria-label="Close" className="ml-4 mr-[10px]"><X className="w-[10px] h-[10px]" strokeWidth={2} /></button>
            </div>
            <div className="flex w-[488px] h-[216px] mt-[5px] ml-1 bg-white border border-[#a5adb8]">
                <CategoryList />
                <Gallery />
                <Preview />
            </div>
            <div className="flex justify-end gap-[7px] pt-[3px] pr-[4px] text-[#333]">
                <button className="w-[51px] h-[14px] bg-[#e1e1e1] border-2 border-[#0078d7] leading-[10px]">OK</button>
                <button className="w-[50px] h-[14px] bg-[#e1e1e1] border border-[#adadad] leading-[10px]">Cancel</button>
            </div>
        </div>
    );
}

const CALLOUTS = [
    {
        text: '#3: Click Process',
        frame: 'left-[243px] top-[194px] w-[90px] h-[28px]',
        arrow: 'left-[284px] top-[222px] h-[28px]',
        box: 'left-[219px] top-[250px] w-[138px] h-[35px]',
    },
    {
        text: '#4: Click Timeline Layout',
        frame: 'left-[498px] top-[277px] w-[64px] h-[49px]',
        arrow: 'left-[526px] top-[325px] h-[27px]',
        box: 'left-[454px] top-[352px] w-[152px] h-[35px] px-3',
    },
    {
        text: '#5: Click OK',
        frame: 'left-[614px] top-[372px] w-[73px] h-[27px]',
        arrow: 'left-[646px] top-[398px] h-[26px]',
        box: 'left-[587px] top-[423px] w-[126px] h-[33px]',
    },
];

export default function App() {
    return (
        <div className="min-h-screen bg-white px-[149px] pt-[116px] font-['Noto_Sans','Open_Sans',sans-serif] text-[8px] leading-[12px]">
            <div className="relative flex flex-col bg-[#e6e6e6]">
                <TitleTabs />
                <Ribbon />
                <QuickAccess />
                <div className="flex h-[441px]">
                    <Thumbnails />
                    <Stage />
                    <FormatPane />
                </div>
                <div className="h-[2px] bg-[#d9d9d9]" />
                <StatusBar />
                <SmartArtDialog />
                {CALLOUTS.map((c) => (
                    <React.Fragment key={c.text}>
                        <div className={`absolute border-4 border-[#ffc000] ${c.frame}`} />
                        <div className={`absolute flex items-center justify-center bg-[#ffff00] text-center text-[13px] leading-[16px] font-bold text-black ${c.box}`}>
                            {c.text}
                        </div>
                        <div className={`absolute flex flex-col items-center w-[9px] ${c.arrow}`}>
                            <span className="flex-1 w-px bg-[#e00000]" />
                            <svg viewBox="0 0 9 8" className="w-[9px] h-2"><path d="M0 0H9L4.500 8Z" fill="#ff0000" /></svg>
                        </div>
                    </React.Fragment>
                ))}
            </div>
        </div>
    );
}
